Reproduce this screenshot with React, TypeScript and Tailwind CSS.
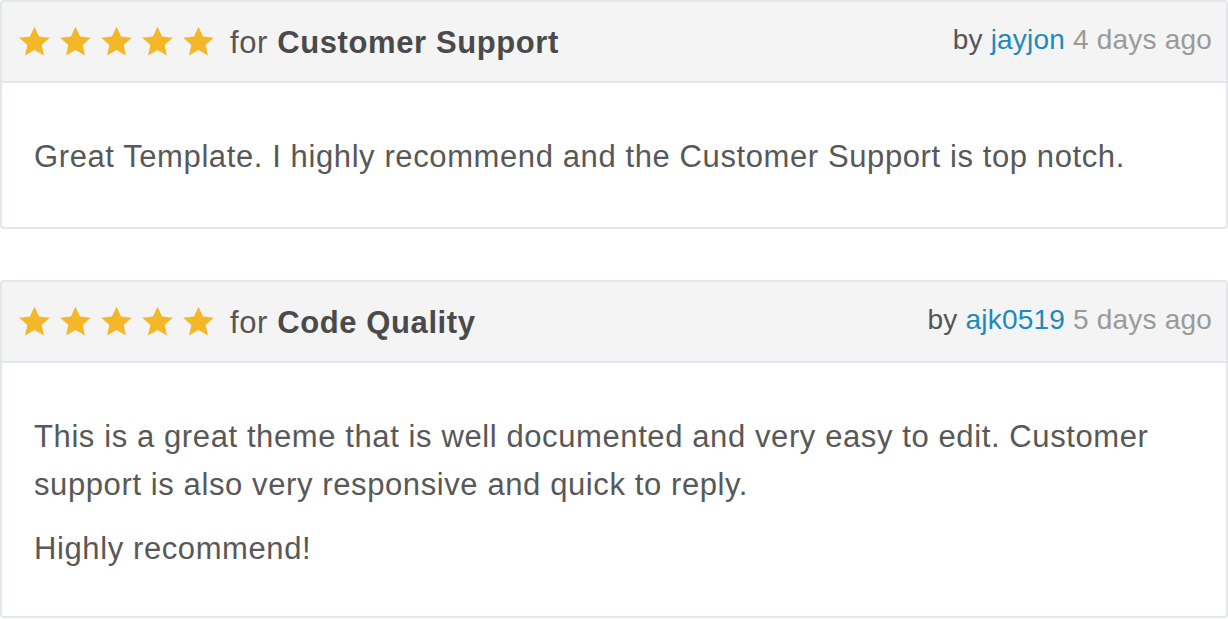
const reviews = [
  {
    category: 'Customer Support',
    author: 'jayjon',
    when: '4 days ago',
    body: ['Great Template. I highly recommend and the Customer Support is top notch.'],
  },
  {
    category: 'Code Quality',
    author: 'ajk0519',
    when: '5 days ago',
    body: [
      'This is a great theme that is well documented and very easy to edit. Customer support is also very responsive and quick to reply.',
      'Highly recommend!',
    ],
  },
];

function Star() {
  return (
    <svg viewBox="0 0 24 24" className="w-[33px] h-[33px]" fill="#f4b728">
      <path d="M12 1.2l3.3 7.2 7.8.8-5.9 5.3 1.7 7.7L12 18.2l-6.9 4 1.7-7.7L.9 9.2l7.8-.8z" />
    </svg>
  );
}

export default function App() {
  return (
    <main className="w-[1228px] bg-white font-['Liberation_Sans',Arial,sans-serif] flex flex-col gap-[51px]">
      {reviews.map((r, i) => (
        <section key={r.author} className="border-2 border-[#e3e6ea] rounded-[4px] overflow-hidden">
          <div className="h-[81px] bg-[#f4f4f4] border-b-2 border-[#e3e6ea] flex items-center justify-between pl-[16px] pr-[14px]">
            <div className="flex items-center">
              <div className="flex gap-[8px]">
                <Star />
                <Star />
                <Star />
                <Star />
                <Star />
              </div>
              <span className="ml-[15px] mt-[3px] text-[31px] tracking-[0.6px] text-[#555]">
                for <b className="text-[#4a4a4a]">{r.category}</b>
              </span>
            </div>
            <div className="text-[28px] tracking-[0.2px] text-[#555] -mt-[4px]">
              by <span className="text-[#1b8bbd]">{r.author}</span>{' '}
              <span className="text-[#9a9a9a]">{r.when}</span>
            </div>
          </div>
          <div
            className={
              'px-[32px] pt-[50px] text-[31px] tracking-[0.6px] leading-[48px] text-[#585858] flex flex-col gap-[16px] ' +
              (i === 0 ? 'pb-[46px]' : 'pb-[43px]')
            }
          >
            {r.body.map((p) => (
              <p key={p}>{p}</p>
            ))}
          </div>
        </section>
      ))}
    </main>
  );
}
